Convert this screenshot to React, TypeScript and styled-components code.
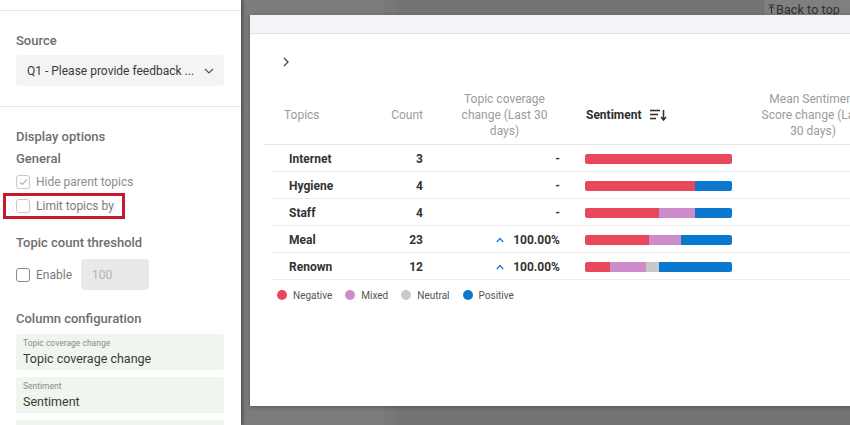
import React from "react";
import styled, { createGlobalStyle } from "styled-components";

const Global = createGlobalStyle`
  html, body { margin: 0; padding: 0; background: #fff; }
  body { width: 850px; height: 425px; overflow: hidden; font-family: Roboto, "Liberation Sans", Arial, sans-serif; }
  * { box-sizing: border-box; }
`;

const C = {
  neg: "#e9485a",
  mix: "#cd8dcb",
  neu: "#c9c9c9",
  pos: "#0b78d0",
};

const Page = styled.div`
  display: flex;
  width: 850px;
  height: 425px;
  overflow: hidden;
`;

/* ---------- Sidebar ---------- */
const Sidebar = styled.aside`
  width: 241px;
  flex: none;
  background: #fff;
  box-shadow: 2px 0 3px rgba(0, 0, 0, 0.35);
  position: relative;
  z-index: 2;
  display: flex;
  flex-direction: column;
`;

const TopStrip = styled.div`
  height: 11px;
  border-bottom: 1px solid #e6e6e6;
  flex: none;
`;

const Section = styled.section<{ $divider?: boolean }>`
  padding: 22px 17px ${(p) => (p.$divider ? "20px" : "0")} 16px;
  border-bottom: ${(p) => (p.$divider ? "1px solid #e6e6e6" : "none")};
  display: flex;
  flex-direction: column;
`;

const Label = styled.div<{ $mt?: number }>`
  font-size: 13px;
  line-height: 16px;
  font-weight: 500;
  color: #6e6e6e;
  margin-top: ${(p) => p.$mt ?? 0}px;
`;

const Select = styled.div`
  margin-top: 6px;
  height: 31px;
  background: #f4f4f4;
  border-radius: 4px;
  display: flex;
  align-items: center;
  justify-content: space-between;
  padding: 0 10px 0 11px;
  font-size: 12px;
  color: #3a3a3a;
`;

const CheckRow = styled.div<{ $mt?: number; $h?: number }>`
  position: relative;
  display: flex;
  align-items: center;
  gap: 6px;
  height: ${(p) => p.$h ?? 24}px;
  margin-top: ${(p) => p.$mt ?? 0}px;
  font-size: 12px;
  color: #7a7a7a;
`;

const Box = styled.span<{ $strong?: boolean }>`
  width: 14px;
  height: 14px;
  flex: none;
  border: 1px solid ${(p) => (p.$strong ? "#8a8a8a" : "#c9c9c9")};
  border-radius: 3px;
  display: flex;
  align-items: center;
  justify-content: center;
  background: #fff;
`;

const CheckText = styled.span<{ $muted?: boolean }>`
  color: ${(p) => (p.$muted ? "#8d8d8d" : "#7a7a7a")};
`;

const Highlight = styled.div`
  position: absolute;
  left: -13px;
  top: -1px;
  width: 122px;
  height: 26px;
  border: 3px solid #c41a2c;
  pointer-events: none;
`;

const NumInput = styled.div`
  margin-left: 3px;
  width: 68px;
  height: 31px;
  border-radius: 4px;
  background: #e9e9e9;
  color: #b2b2b2;
  font-size: 12px;
  display: flex;
  align-items: center;
  padding-left: 11px;
`;

const Card = styled.div<{ $mt?: number }>`
  margin-top: ${(p) => p.$mt ?? 7}px;
  min-height: 36px;
  background: #eef6ee;
  border-radius: 2px;
  padding: 4px 7px 3px;
  display: flex;
  flex-direction: column;
  flex: none;
`;

const CardLabel = styled.div`
  font-size: 8.5px;
  line-height: 11px;
  color: #8c8c8c;
`;

const CardValue = styled.div`
  margin-top: 2px;
  font-size: 12.5px;
  line-height: 16px;
  color: #3a3a3a;
`;

/* ---------- Background area ---------- */
const Main = styled.main`
  flex: 1;
  position: relative;
  display: flex;
  background: #7c7c7c;
`;

const BgLeft = styled.div`
  width: 143px;
  flex: none;
  background: #7c7c7c;
`;

const BgStrip = styled.div`
  width: 13px;
  flex: none;
  background: #777;
  border-left: 1px solid #747474;
`;

const BgMain = styled.div`
  flex: 1;
  background: #747474;
  display: flex;
  flex-direction: column;
`;

const BgTop = styled.div`
  height: 16px;
  display: flex;
  justify-content: flex-end;
`;

const BackTop = styled.div`
  width: 87px;
  height: 16px;
  border-left: 1px solid #6e6e6e;
  background: #7f7f7f;
  font-size: 12.5px;
  letter-spacing: 0.1px;
  color: #2f2f2f;
  display: flex;
  align-items: center;
  gap: 1px;
  padding: 2px 0 0 4px;
  white-space: nowrap;
`;

/* ---------- Modal ---------- */
const Modal = styled.div`
  position: absolute;
  left: 9px;
  top: 15px;
  width: 640px;
  height: 391px;
  background: #fff;
  box-shadow: 0 1px 4px rgba(0, 0, 0, 0.3);
  display: flex;
  flex-direction: column;
`;

const ModalHeader = styled.div`
  height: 19px;
  flex: none;
  background: #f3f3f8;
  border-bottom: 1px solid #e2e2e8;
`;

const Crumb = styled.div`
  margin: 23px 0 0 32px;
  height: 10px;
  display: flex;
`;

const Table = styled.div`
  margin: 21px 0 0 14px;
  display: flex;
  flex-direction: column;
`;

const HeadRow = styled.div`
  display: grid;
  grid-template-columns: 106px 63px 143px 175px 124px;
  height: 57px;
  padding: 2px 0 4px;
  align-items: center;
  border-bottom: 1px solid #e9e9e9;
  font-size: 12px;
  line-height: 16px;
  color: #9b9b9b;
`;

const HeadCell = styled.div<{ $align?: "left" | "right" | "center"; $pl?: number; $pr?: number }>`
  text-align: ${(p) => p.$align ?? "left"};
  padding-left: ${(p) => p.$pl ?? 0}px;
  padding-right: ${(p) => p.$pr ?? 0}px;
  white-space: nowrap;
`;

const SortHead = styled.div`
  padding-left: 10px;
  display: flex;
  align-items: center;
  gap: 8px;
  font-weight: 700;
  color: #2e2e2e;
`;

const Row = styled.div`
  margin-left: 7px;
  display: grid;
  grid-template-columns: 99px 63px 143px 175px 124px;
  height: 27px;
  padding-top: 1px;
  align-items: center;
  border-bottom: 1px solid #ececec;
  font-size: 12px;
  color: #333;
`;

const Name = styled.div`
  padding-left: 18px;
  font-weight: 700;
`;

const Count = styled.div`
  text-align: right;
  padding-right: 10px;
  font-weight: 700;
`;

const Change = styled.div`
  display: flex;
  justify-content: flex-end;
  align-items: center;
  gap: 9px;
  padding-right: 16px;
  font-weight: 700;
`;

const BarCell = styled.div`
  padding-left: 9px;
`;

const Bar = styled.div`
  width: 147px;
  height: 10px;
  border-radius: 2px;
  overflow: hidden;
  display: flex;
`;

const Seg = styled.div<{ $c: string }>`
  height: 100%;
  background: ${(p) => p.$c};
`;

const Legend = styled.div`
  margin: 8px 0 0 13px;
  height: 14px;
  display: flex;
  align-items: center;
  gap: 13px;
  font-size: 10px;
  color: #555;
`;

const LegendItem = styled.div`
  display: flex;
  align-items: center;
  gap: 6px;
`;

const Dot = styled.span<{ $c: string }>`
  width: 10px;
  height: 10px;
  border-radius: 50%;
  background: ${(p) => p.$c};
`;

type RowData = {
  name: string;
  count: number;
  change: string | null;
  segs: [number, number, number, number];
};

const rows: RowData[] = [
  { name: "Internet", count: 3, change: null, segs: [3, 0, 0, 0] },
  { name: "Hygiene", count: 4, change: null, segs: [3, 0, 0, 1] },
  { name: "Staff", count: 4, change: null, segs: [2, 1, 0, 1] },
  { name: "Meal", count: 23, change: "100.00%", segs: [10, 5, 0, 8] },
  { name: "Renown", count: 12, change: "100.00%", segs: [2, 3, 1, 6] },
];

const segColors = [C.neg, C.mix, C.neu, C.pos];

const Check = () => (
  <svg width="9" height="8" viewBox="0 0 9 8">
    <polyline points="1,4.2 3.4,6.4 8,1.4" fill="none" stroke="#b5b5b5" strokeWidth="1.3" />
  </svg>
);

const ChevronDown = () => (
  <svg width="10" height="6" viewBox="0 0 10 6">
    <polyline points="1,1 5,5 9,1" fill="none" stroke="#555" strokeWidth="1.2" />
  </svg>
);

const SortIcon = () => (
  <svg width="17" height="12" viewBox="0 0 17 12">
    <g stroke="#333" strokeWidth="1.6" fill="none">
      <line x1="0" y1="1.5" x2="10" y2="1.5" />
      <line x1="0" y1="5.5" x2="8" y2="5.5" />
      <line x1="0" y1="9.5" x2="6" y2="9.5" />
      <line x1="13.5" y1="1" x2="13.5" y2="10.5" />
    </g>
    <polyline points="11,8 13.5,11 16,8" fill="none" stroke="#333" strokeWidth="1.6" />
  </svg>
);

const UpChevron = () => (
  <svg width="8" height="6" viewBox="0 0 8 6">
    <polyline points="0.8,5 4,1.5 7.2,5" fill="none" stroke="#1a7ad6" strokeWidth="1.3" />
  </svg>
);

const RightChevron = () => (
  <svg width="8" height="10" viewBox="0 0 8 10">
    <polyline points="2,1 6,5 2,9" fill="none" stroke="#444" strokeWidth="1.3" />
  </svg>
);

const BackIcon = () => (
  <svg width="7" height="10" viewBox="0 0 7 10">
    <line x1="0.5" y1="1" x2="6.5" y2="1" stroke="#2f2f2f" strokeWidth="1" />
    <line x1="3.5" y1="2" x2="3.5" y2="9.5" stroke="#2f2f2f" strokeWidth="1" />
    <polyline points="1,4.5 3.5,2 6,4.5" fill="none" stroke="#2f2f2f" strokeWidth="1" />
  </svg>
);

export default function App() {
  return (
    <Page>
      <Global />
      <Sidebar>
        <TopStrip />
        <Section $divider>
          <Label>Source</Label>
          <Select>
            <span>Q1 - Please provide feedback ...</span>
            <ChevronDown />
          </Select>
        </Section>
        <Section>
          <Label>Display options</Label>
          <Label $mt={6}>General</Label>
          <CheckRow $mt={3}>
            <Box>
              <Check />
            </Box>
            <CheckText $muted>Hide parent topics</CheckText>
          </CheckRow>
          <CheckRow>
            <Box />
            <CheckText>Limit topics by</CheckText>
            <Highlight />
          </CheckRow>
          <Label $mt={17}>Topic count threshold</Label>
          <CheckRow $mt={8} $h={31}>
            <Box $strong />
            <CheckText>Enable</CheckText>
            <NumInput>100</NumInput>
          </CheckRow>
          <Label $mt={21}>Column configuration</Label>
          <Card>
            <CardLabel>Topic coverage change</CardLabel>
            <CardValue>Topic coverage change</CardValue>
          </Card>
          <Card>
            <CardLabel>Sentiment</CardLabel>
            <CardValue>Sentiment</CardValue>
          </Card>
          <Card />
        </Section>
      </Sidebar>
      <Main>
        <BgLeft />
        <BgStrip />
        <BgMain>
          <BgTop>
            <BackTop>
              <BackIcon />
              <span>Back to top</span>
            </BackTop>
          </BgTop>
        </BgMain>
        <Modal>
          <ModalHeader />
          <Crumb>
            <RightChevron />
          </Crumb>
          <Table>
            <HeadRow>
              <HeadCell $pl={20}>Topics</HeadCell>
              <HeadCell $align="right" $pr={10}>Count</HeadCell>
              <HeadCell $align="center">
                Topic coverage
                <br />
                change (Last 30
                <br />
                days)
              </HeadCell>
              <SortHead>
                <span>Sentiment</span>
                <SortIcon />
              </SortHead>
              <HeadCell $align="center">
                Mean Sentiment
                <br />
                Score change (Last
                <br />
                30 days)
              </HeadCell>
            </HeadRow>
            {rows.map((r) => {
              const total = r.segs.reduce((a, b) => a + b, 0);
              return (
                <Row key={r.name}>
                  <Name>{r.name}</Name>
                  <Count>{r.count}</Count>
                  <Change>
                    {r.change ? (
                      <>
                        <UpChevron />
                        <span>{r.change}</span>
                      </>
                    ) : (
                      <span>-</span>
                    )}
                  </Change>
                  <BarCell>
                    <Bar>
                      {r.segs.map((s, i) =>
                        s > 0 ? (
                          <Seg key={i} $c={segColors[i]} style={{ width: `${(s / total) * 100}%` }} />
                        ) : null
                      )}
                    </Bar>
                  </BarCell>
                  <div />
                </Row>
              );
            })}
            <Legend>
              <LegendItem>
                <Dot $c={C.neg} />
                Negative
              </LegendItem>
              <LegendItem>
                <Dot $c={C.mix} />
                Mixed
              </LegendItem>
              <LegendItem>
                <Dot $c={C.neu} />
                Neutral
              </LegendItem>
              <LegendItem>
                <Dot $c={C.pos} />
                Positive
              </LegendItem>
            </Legend>
          </Table>
        </Modal>
      </Main>
    </Page>
  );
}
